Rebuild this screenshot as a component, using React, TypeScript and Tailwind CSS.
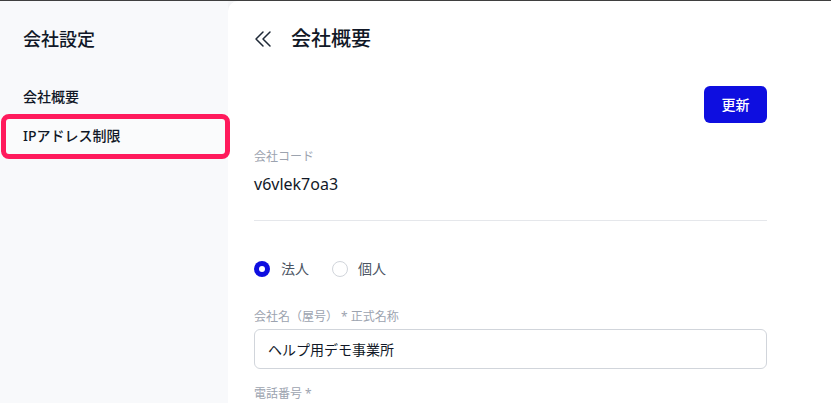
const FONT = "font-['Noto_Sans','Noto_Sans_CJK_JP',sans-serif]";

function DoubleChevron() {
  return (
    <svg width="18" height="18" viewBox="0 0 18 18" fill="none" stroke="#1f2937" strokeWidth="1.5" strokeLinecap="round" strokeLinejoin="round">
      <path d="M9 2 L2 9 L9 16" />
      <path d="M16 2 L9 9 L16 16" />
    </svg>
  );
}

function Sidebar() {
  return (
    <aside className="relative z-10 w-[228px] shrink-0 bg-[#f8f9fb] pt-[25px]">
      <h1 className="px-[23px] text-[18px] font-medium leading-[26px] text-[#111827]">会社設定</h1>
      <nav className="mt-[27px] flex flex-col">
        <div className="px-[23px] py-[8px] text-[14px] font-medium leading-[20px] text-[#111827]">会社概要</div>
        <div className="ml-[1px] -mt-[1px] flex h-[45px] w-[229px] items-center rounded-[8px] border-[5px] border-[#ff1a5c] bg-[#fafbfc] pb-[2px] pl-[17px] text-[14px] font-medium leading-[20px] text-[#111827]">
          IPアドレス制限
        </div>
      </nav>
    </aside>
  );
}

function Main() {
  return (
    <main className="flex-1 rounded-tl-[10px] bg-white shadow-[-6px_0_14px_rgba(0,0,0,0.04)] pl-[26px] pr-[64px] pt-[25px]">
      <div className="flex h-[26px] items-center gap-[19px]">
        <DoubleChevron />
        <h2 className="text-[20px] font-medium text-[#111827]">会社概要</h2>
      </div>
      <div className="mt-[34px] flex justify-end">
        <button className="h-[37px] w-[63px] rounded-[6px] bg-[#0e0ee0] text-[14px] font-medium text-white">更新</button>
      </div>
      <div className="mt-[25px] text-[12px] leading-[18px] text-[#9ca3af]">会社コード</div>
      <div className="mt-[7px] text-[16px] leading-[22px] text-[#111827]">v6vlek7oa3</div>
      <div className="mt-[25px] h-px bg-[#e5e7eb]" />
      <div className="mt-[37px] flex items-center text-[14px] text-[#4b5563]">
        <span className="flex h-[16px] w-[16px] items-center justify-center rounded-full bg-[#0e0ee0]">
          <span className="h-[6px] w-[6px] rounded-full bg-white" />
        </span>
        <span className="ml-[11px]">法人</span>
        <span className="ml-[23px] h-[16px] w-[16px] rounded-full border border-[#d1d5db]" />
        <span className="ml-[10px]">個人</span>
      </div>
      <div className="mt-[29px] text-[12px] leading-[18px] text-[#9ca3af]">会社名（屋号） * 正式名称</div>
      <div className="mt-[3px] flex h-[40px] items-center rounded-[6px] border border-[#d1d5db] px-[13px] text-[14px] text-[#111827]">
        ヘルプ用デモ事業所
      </div>
      <div className="mt-[16px] text-[12px] leading-[18px] text-[#9ca3af]">電話番号 *</div>
    </main>
  );
}

export default function App() {
  return (
    <div className={`${FONT} flex h-[403px] w-[831px] overflow-hidden border-t border-[#3f3f3f] bg-[#f8f9fb]`}>
      <Sidebar />
      <Main />
    </div>
  );
}
